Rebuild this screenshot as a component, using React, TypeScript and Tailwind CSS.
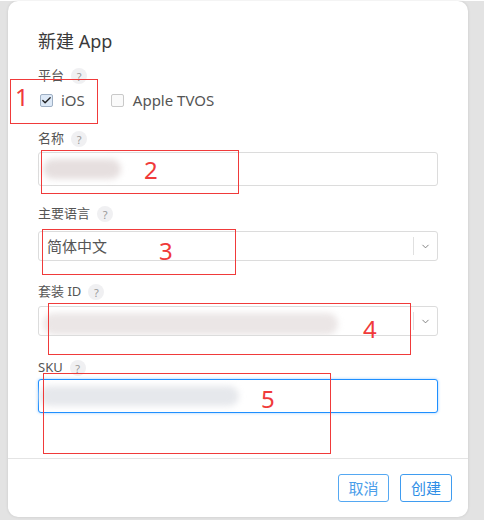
import { ChevronDown, Check } from 'lucide-react';

const font = { fontFamily: '"Noto Sans", "Noto Sans CJK SC", sans-serif' };

function Hint() {
    return (
        <span className="ml-[7px] inline-flex h-4 w-4 items-center justify-center rounded-full bg-[#f0f0f2] text-[11px] leading-none text-[#999]">
            ?
        </span>
    );
}

function Label({ text }: { text: string }) {
    return (
        <div className="flex h-5 items-center text-[13px] text-[#555]">
            {text}
            <Hint />
        </div>
    );
}

function Blob({ w, tint }: { w: number; tint: string }) {
    return <div className={`h-[20px] rounded-full blur-[3px] ${tint}`} style={{ width: w }} />;
}

function Select({ children }: { children: React.ReactNode }) {
    return (
        <div className="flex h-[30px] w-[400px] items-center rounded-[3px] border border-[#dcdcdc] bg-white">
            <div className="flex min-w-0 flex-1 items-center overflow-hidden pl-2 text-[15px] text-[#555]">{children}</div>
            <div className="h-[18px] w-px bg-[#e0e0e0]" />
            <div className="flex w-[23px] items-center justify-center text-[#777]">
                <ChevronDown size={11} strokeWidth={2} />
            </div>
        </div>
    );
}

export default function App() {
    return (
        <div className="relative min-h-[520px] bg-[#e3e3e3] pl-2 pr-4" style={font}>
            <div className="mt-px flex h-[516px] w-[460px] flex-col rounded-[10px] bg-white shadow-[0_0_3px_rgba(0,0,0,0.12)]">
                <div className="flex flex-col px-[30px] pt-[28px]">
                    <h2 className="h-6 text-[18px] leading-6 text-[#3a3a3a]">新建 App</h2>

                    <div className="mt-[13px]">
                        <Label text="平台" />
                    </div>
                    <div className="mt-1 flex h-5 items-center text-[15px] text-[#555]">
                        <span className="ml-[2px] flex h-[13px] w-[13px] items-center justify-center rounded-[2px] border border-[#9fb0c4] bg-[#dde9f7] text-[#222]">
                            <Check size={11} strokeWidth={3} />
                        </span>
                        <span className="ml-[8px]">iOS</span>
                        <span className="ml-[26px] h-[13px] w-[13px] rounded-[2px] border border-[#c9c9c9] bg-[#fafafa]" />
                        <span className="ml-[9px]">Apple TVOS</span>
                    </div>

                    <div className="mt-[19px]">
                        <Label text="名称" />
                    </div>
                    <div className="mt-[3px] flex h-[34px] w-[400px] items-center rounded-[3px] border border-[#dcdcdc] bg-white pl-[4px]">
                        <Blob w={78} tint="bg-[#e6dfdf]" />
                    </div>

                    <div className="mt-[18px]">
                        <Label text="主要语言" />
                    </div>
                    <div className="mt-[7px]">
                        <Select>简体中文</Select>
                    </div>

                    <div className="mt-[21px]">
                        <Label text="套装 ID" />
                    </div>
                    <div className="mt-1">
                        <Select>
                            <div className="-ml-1 mt-[6px] h-[22px] w-[295px] rounded-full bg-[#ebe6e6] blur-[3px]" />
                        </Select>
                    </div>

                    <div className="mt-[22px]">
                        <Label text="SKU" />
                    </div>
                    <div className="mt-px flex h-[34px] w-[400px] items-center rounded-[3px] border border-[#1e8fff] bg-white shadow-[0_0_3px_rgba(30,143,255,0.45)]">
                        <Blob w={200} tint="bg-[#e6e8ec]" />
                    </div>
                </div>

                <div className="mt-[45px] h-px bg-[#e4e4e4]" />

                <div className="flex justify-end gap-[11px] pr-4 pt-[15px]">
                    <button className="h-[28px] w-[51px] rounded-[3px] border border-[#55a8f2] text-[15px] text-[#4a9eea]">取消</button>
                    <button className="h-[28px] w-[52px] rounded-[3px] border border-[#3f9cf0] text-[15px] text-[#2f8ee6]">创建</button>
                </div>
            </div>

            {/* red annotations */}
            <div className="absolute left-[10px] top-[78px] h-[45px] w-[88px] border border-[#f03a3a]" />
            <div className="absolute left-[15px] top-[82px] text-[24px] leading-7 text-[#f03a3a]">1</div>
            <div className="absolute left-[41px] top-[149px] h-[44px] w-[198px] border border-[#f03a3a]" />
            <div className="absolute left-[144px] top-[155px] text-[24px] leading-7 text-[#f03a3a]">2</div>
            <div className="absolute left-[42px] top-[228px] h-[46px] w-[194px] border border-[#f03a3a]" />
            <div className="absolute left-[159px] top-[236px] text-[24px] leading-7 text-[#f03a3a]">3</div>
            <div className="absolute left-[48px] top-[302px] h-[52px] w-[363px] border border-[#f03a3a]" />
            <div className="absolute left-[363px] top-[314px] text-[24px] leading-7 text-[#f03a3a]">4</div>
            <div className="absolute left-[43px] top-[372px] h-[81px] w-[288px] border border-[#f03a3a]" />
            <div className="absolute left-[261px] top-[384px] text-[24px] leading-7 text-[#f03a3a]">5</div>
        </div>
    );
}
